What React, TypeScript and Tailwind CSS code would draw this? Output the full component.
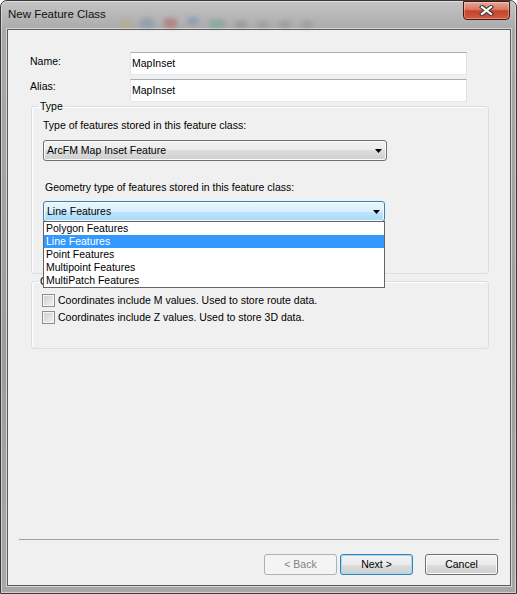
import React from "react";

const GEOMETRY_TYPES = [
  "Polygon Features",
  "Line Features",
  "Point Features",
  "Multipoint Features",
  "MultiPatch Features",
];

function DropArrow() {
  return (
    <svg width="7" height="4" viewBox="0 0 7 4">
      <path d="M0 0h7L3.5 4z" fill="#000" />
    </svg>
  );
}

function TextField({ value }: { value: string }) {
  return (
    <div className="w-[337px] h-[23px] bg-white border border-[#abadb3] border-l-[#e2e3ea] border-r-[#dbdfe6] border-b-[#e3e9ef] flex items-center pl-[1px] text-black">
      {value}
    </div>
  );
}

function Checkbox({ label }: { label: string }) {
  return (
    <div className="flex items-center gap-[3px] h-[13px] ml-[4px]">
      <span className="w-[13px] h-[13px] border border-[#8e8f8f] bg-[linear-gradient(135deg,#c9cdd3,#f4f4f4)] shadow-[inset_0_0_0_1px_#f6f6f6]" />
      <span>{label}</span>
    </div>
  );
}

function WinButton({
  label,
  kind = "normal",
}: {
  label: string;
  kind?: "normal" | "default" | "disabled";
}) {
  if (kind === "disabled") {
    return (
      <div className="w-[73px] h-[21px] rounded-[3px] border border-[#adb2b5] bg-[#f4f4f4] flex items-center justify-center text-[#838383]">
        {label}
      </div>
    );
  }
  return (
    <div
      className={`w-[73px] h-[21px] rounded-[3px] border flex items-center justify-center bg-[linear-gradient(#f2f2f2,#ebebeb_50%,#dddddd_50%,#cfcfcf)] ${
        kind === "default"
          ? "border-[#3c7fb1] shadow-[inset_0_0_0_1px_#9fdcf8]"
          : "border-[#707070] shadow-[inset_0_0_0_1px_#fbfbfb]"
      }`}
    >
      {label}
    </div>
  );
}

export default function App() {
  return (
    <div className="w-[517px] h-[594px] flex flex-col rounded-t-[7px] border border-[#3a3a3a] bg-[linear-gradient(180deg,#c4c4c4,#a9a9a9_30px,#9d9d9d_60%,#a8a8a8)] shadow-[inset_0_0_0_1px_rgba(255,255,255,0.45)] overflow-hidden [font-family:'Liberation_Sans',Arial,sans-serif] text-[10.5px] text-black">
      {/* Title bar */}
      <div className="h-[28px] flex items-start shrink-0">
        <div className="h-[28px] flex items-center pl-[7px] text-[11.5px] text-[#111]">
          New Feature Class
        </div>
        <div className="h-[28px] flex items-end gap-[10px] pb-[1px] ml-[14px] opacity-40">
          <span className="w-[10px] h-[9px] rounded-sm bg-[#c2a868] blur-[2px]" />
          <span className="w-[14px] h-[10px] rounded-sm bg-[#6d8aa8] blur-[2px]" />
          <span className="w-[13px] h-[10px] rounded-sm bg-[#b04a44] blur-[2px]" />
          <span className="w-[12px] h-[8px] mb-[3px] rounded-sm bg-[#5f82b8] blur-[2px]" />
          <span className="w-[16px] h-[9px] rounded-sm bg-[#5fa08f] blur-[2px]" />
          <span className="w-[12px] h-[7px] rounded-sm bg-[#7e7e7e] blur-[2px]" />
          <span className="w-[12px] h-[7px] rounded-sm bg-[#8a8a8a] blur-[2px]" />
          <span className="w-[12px] h-[7px] rounded-sm bg-[#858585] blur-[2px]" />
          <span className="w-[12px] h-[7px] rounded-sm bg-[#8a8a8a] blur-[2px]" />
        </div>
        <div className="ml-auto mr-[6px] w-[47px] h-[19px] rounded-b-[4px] border border-[#471a10] bg-[linear-gradient(#e9a898,#d77660_45%,#c5432a_52%,#d35c40)] shadow-[inset_0_0_0_1px_rgba(255,255,255,0.3)] flex items-center justify-center">
          <svg width="15" height="11" viewBox="0 0 15 11">
            <path
              d="M3 2 L12 9 M12 2 L3 9"
              stroke="#3a3a3a"
              strokeWidth="4.2"
              strokeLinecap="square"
            />
            <path
              d="M3 2 L12 9 M12 2 L3 9"
              stroke="#ffffff"
              strokeWidth="2.2"
              strokeLinecap="square"
            />
          </svg>
        </div>
      </div>

      {/* Client area */}
      <div className="flex-1 ml-[6px] mr-[5px] mb-[7px] border border-[#5c5c5c] bg-[#f0f0f0] shadow-[0_0_0_1px_#d4d4d4] flex flex-col">
        <div className="pl-[22px] pt-[22px] flex flex-col">
          <div className="flex gap-[4px] flex-col">
            <div className="flex">
              <div className="w-[100px] pt-[2px]">Name:</div>
              <TextField value="MapInset" />
            </div>
            <div className="flex">
              <div className="w-[100px]">Alias:</div>
              <TextField value="MapInset" />
            </div>
          </div>

          {/* Type group */}
          <fieldset className="ml-[1px] w-[458px] border border-[#d5dfe5] rounded-[3px] shadow-[inset_1px_1px_0_#fff] pl-[6px] pb-[51px]">
            <legend className="px-[2px] leading-[8px]">Type</legend>
            <div className="flex flex-col pl-[5px]">
              <div className="mt-[9px] leading-[13px]">
                Type of features stored in this feature class:
              </div>
              <div className="mt-[8px] w-[344px] h-[21px] rounded-[3px] border border-[#707070] bg-[linear-gradient(#f2f2f2,#ebebeb_50%,#dddddd_50%,#cfcfcf)] shadow-[inset_0_0_0_1px_#fbfbfb] flex items-center justify-between pl-[3px] pr-[4px]">
                <span>ArcFM Map Inset Feature</span>
                <DropArrow />
              </div>
              <div className="mt-[20px] ml-[2px] leading-[13px]">
                Geometry type of features stored in this feature class:
              </div>
              <div className="mt-[7px] relative w-[342px] h-[21px]">
                <div className="h-[21px] rounded-[3px] border border-[#3c7fb1] bg-[linear-gradient(#eaf6fd,#d9f0fc_50%,#bee6fd_50%,#a7d9f5)] shadow-[inset_0_0_0_1px_#f2faff] flex items-center justify-between pl-[3px] pr-[4px]">
                  <span>Line Features</span>
                  <DropArrow />
                </div>
                {/* Open drop-down list */}
                <div className="absolute left-0 top-[20px] z-10 w-[342px] border border-[#646464] bg-white flex flex-col">
                  {GEOMETRY_TYPES.map((item) => (
                    <div
                      key={item}
                      className={`h-[13px] leading-[13px] pl-[2px] ${
                        item === "Line Features"
                          ? "bg-[#3399ff] text-white"
                          : ""
                      }`}
                    >
                      {item}
                    </div>
                  ))}
                </div>
              </div>
            </div>
          </fieldset>

          {/* Coordinates group (label mostly hidden by the open list) */}
          <fieldset className="mt-[3px] ml-[1px] w-[458px] border border-[#d5dfe5] rounded-[3px] shadow-[inset_1px_1px_0_#fff] pl-[6px] pb-[24px]">
            <legend className="px-[2px] leading-[8px]">C</legend>
            <div className="mt-[9px] flex flex-col gap-[4px]">
              <Checkbox label="Coordinates include M values. Used to store route data." />
              <Checkbox label="Coordinates include Z values. Used to store 3D data." />
            </div>
          </fieldset>
        </div>

        <div className="mt-auto mx-[11px] h-px bg-[#a0a0a0]" />
        <div className="flex justify-end pt-[14px] pr-[12px] pb-[10px]">
          <div className="flex gap-[3px]">
            <WinButton label="< Back" kind="disabled" />
            <WinButton label="Next >" kind="default" />
          </div>
          <div className="ml-[12px]">
            <WinButton label="Cancel" />
          </div>
        </div>
      </div>
    </div>
  );
}
